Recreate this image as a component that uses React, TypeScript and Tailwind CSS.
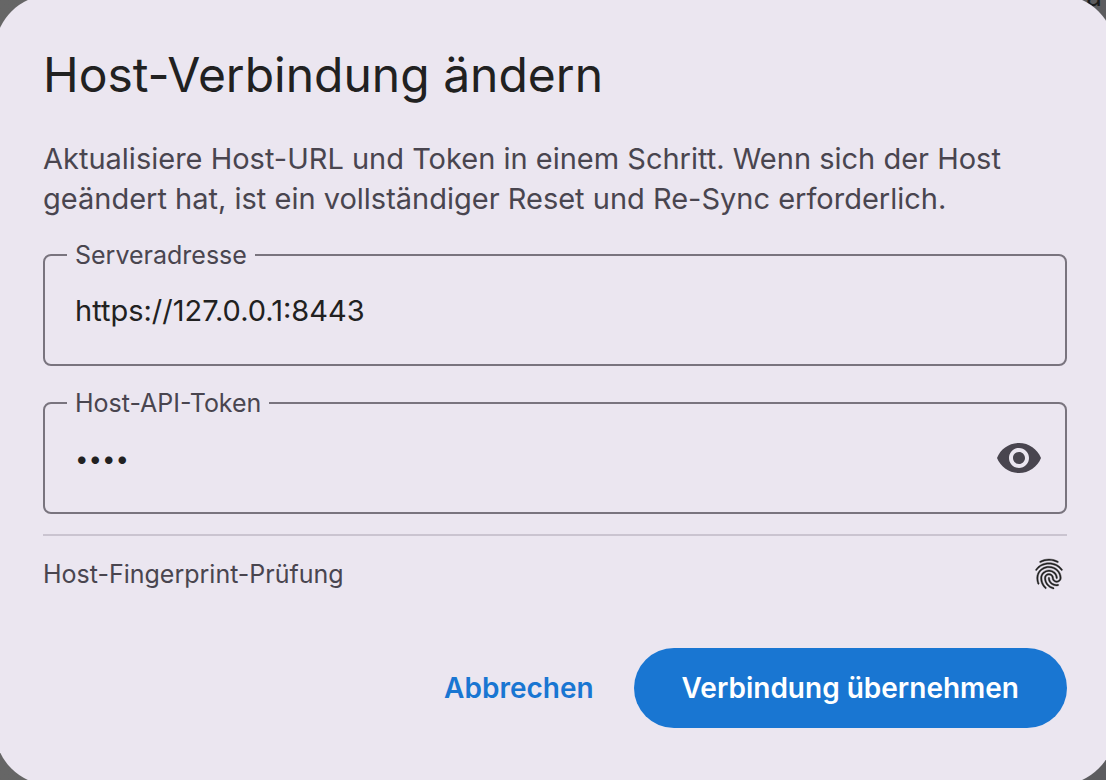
import React, { useState } from 'react';
import { MdFingerprint, MdVisibility, MdVisibilityOff } from 'react-icons/md';

export default function App() {
  const [url, setUrl] = useState('https://127.0.0.1:8443');
  const [token, setToken] = useState('1234');
  const [showToken, setShowToken] = useState(false);

  return (
    <div className="relative flex min-h-screen overflow-hidden bg-gradient-to-r from-[#666666] to-[#5c5c5f] font-['Inter',sans-serif] text-[#212121]">
      {/* Page behind the dialog */}
      <span className="absolute -top-4 right-1 text-[28px] leading-6 text-[#1c1c1c]">a</span>

      {/* Dialog */}
      <div
        role="dialog"
        aria-labelledby="dialog-title"
        className="relative -my-[5px] -ml-[5px] -mr-[9px] flex-1 rounded-[56px] bg-[#ebe6f0] px-12 pt-12 pb-14"
      >
        <h1 id="dialog-title" className="text-[48px] leading-16">Host-Verbindung ändern</h1>
        <p className="mt-8 text-[29px] leading-10 text-[#49454f]">
          Aktualisiere Host-URL und Token in einem Schritt. Wenn sich der Host geändert hat, ist ein
          vollständiger Reset und Re-Sync erforderlich.
        </p>

        {/* Server address */}
        <fieldset className="mt-[19px] h-32 rounded-lg border-2 border-[#79747e] px-[22px]">
          <legend className="px-2 text-[25px] leading-[34px] text-[#49454f]">
            <label htmlFor="server-url">Serveradresse</label>
          </legend>
          <input
            id="server-url"
            type="text"
            value={url}
            onChange={(e) => setUrl(e.target.value)}
            className="h-19 w-full bg-transparent px-2 text-[29px] outline-none"
          />
        </fieldset>

        {/* Token */}
        <fieldset className="mt-5 h-32 rounded-lg border-2 border-[#79747e] px-[22px]">
          <legend className="px-2 text-[25px] leading-[34px] text-[#49454f]">
            <label htmlFor="host-token">Host-API-Token</label>
          </legend>
          <div className="flex items-center">
            <input
              id="host-token"
              type={showToken ? 'text' : 'password'}
              value={token}
              onChange={(e) => setToken(e.target.value)}
              className="h-19 min-w-0 flex-1 bg-transparent px-2 text-2xl outline-none"
            />
            <button
              type="button"
              aria-label="Token anzeigen"
              onClick={() => setShowToken(!showToken)}
              className="text-[#49454f]"
            >
              {showToken ? <MdVisibilityOff className="h-12 w-12" /> : <MdVisibility className="h-12 w-12" />}
            </button>
          </div>
        </fieldset>

        <hr className="mt-5 border-t-2 border-[#cac4d0]" />

        {/* Fingerprint check */}
        <div className="mt-5 flex items-center justify-between">
          <span className="text-[25px] leading-9 text-[#49454f]">Host-Fingerprint-Prüfung</span>
          <button type="button" aria-label="Fingerprint prüfen">
            <MdFingerprint className="h-9 w-9 [&>path:last-child]:stroke-current [&>path:last-child]:stroke-[0.25]" />
          </button>
        </div>

        {/* Actions */}
        <div className="mt-14 flex justify-end gap-4 text-[28px] font-semibold">
          <button type="button" className="h-20 rounded-full px-6 text-[#1976d2]">
            Abbrechen
          </button>
          <button type="button" className="h-20 rounded-full bg-[#1976d2] px-12 text-white">
            Verbindung übernehmen
          </button>
        </div>
      </div>
    </div>
  );
}
